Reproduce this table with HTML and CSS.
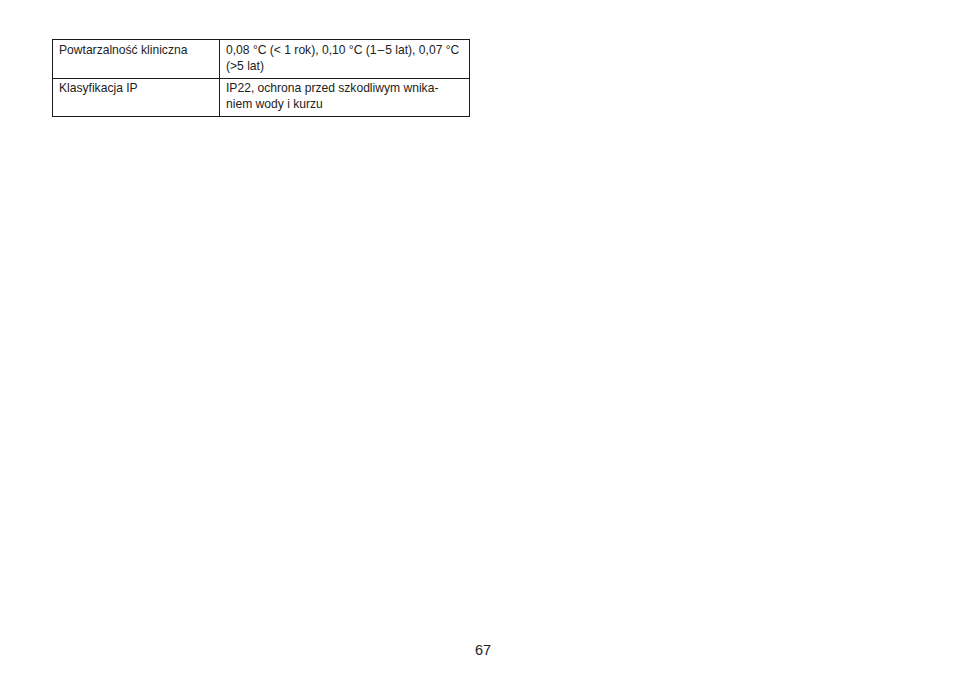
FILE: index.html
```html
<!DOCTYPE html>
<html lang="pl">
<head>
<meta charset="utf-8">
<link rel="stylesheet" href="styles.css">
</head>
<body>
<div class="page">
  <table class="spec">
    <tr>
      <td class="label">Powtarzalność kliniczna</td>
      <td class="value">0,08 °C (&lt; 1 rok), 0,10 °C (1&#8202;–&#8202;5 lat), 0,07 °C<br>(&gt;5 lat)</td>
    </tr>
    <tr>
      <td class="label">Klasyfikacja IP</td>
      <td class="value">IP22, ochrona przed szkodliwym wnika-<br>niem wody i kurzu</td>
    </tr>
  </table>
  <div class="pagenum">67</div>
</div>
</body>
</html>
```

FILE: styles.css
```css
html, body {
  margin: 0;
  padding: 0;
  background: #fff;
}
.page {
  width: 954px;
  height: 677px;
  padding: 39px 0 0 52px;
  box-sizing: border-box;
  font-family: "Liberation Sans", Arial, sans-serif;
  color: #222;
}
.spec {
  border-collapse: collapse;
  width: 418px;
  table-layout: fixed;
}
.spec td {
  border: 1px solid #1a1a1a;
  font-size: 12.1px;
  line-height: 16px;
  padding: 2px 6px 4px 6px;
  vertical-align: top;
  white-space: nowrap;
}
.spec .label {
  width: 154px;
}
.spec tr:last-child td {
  padding-top: 1px;
  padding-bottom: 4px;
}
.pagenum {
  margin: 524px 0 0 423px;
  font-size: 14.5px;
  line-height: 18px;
}
```
